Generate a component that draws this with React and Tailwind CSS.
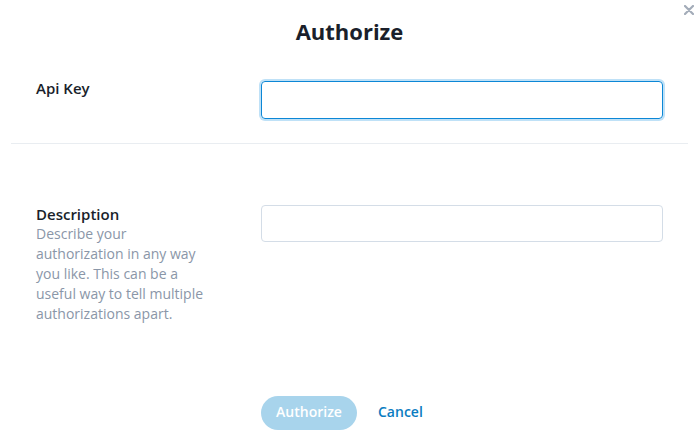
import React from "react";

export default function App() {
  return (
    <div
      className="relative w-[699px] h-[440px] bg-white overflow-hidden"
      style={{ fontFamily: "'Open Sans', Lato, sans-serif" }}
    >
      <button className="absolute right-[3px] top-[3px] w-[14px] h-[14px] flex items-center justify-center text-[#a3acb9]">
        <svg width="10" height="10" viewBox="0 0 10 10">
          <path d="M1 1L9 9M9 1L1 9" stroke="currentColor" strokeWidth="2.2" strokeLinecap="round" />
        </svg>
      </button>
      <h1 className="pt-[16px] text-center text-[22px] leading-[30px] font-bold text-[#1a1f2b]">
        Authorize
      </h1>
      <div className="flex px-[36px] pt-[35px] pb-[24px]">
        <div className="w-[226px] -mt-[3px] text-[15px] leading-[20px] font-semibold text-[#1a1f2b]">Api Key</div>
        <div className="flex-1">
          <div className="h-[38px] w-[402px] rounded-[4px] border-[1.5px] border-[#0c87d6] shadow-[0_0_0_2px_#bfe1f7]" />
        </div>
      </div>
      <div className="mx-[11px] h-px bg-[#e9edf1]" />
      <div className="flex px-[36px] pt-[60px]">
        <div className="w-[226px]">
          <div className="text-[15px] leading-[20px] font-semibold text-[#1a1f2b]">Description</div>
          <div className="w-[200px] text-[14px] leading-[20px] text-[#8a96a8]">
            Describe your
            <br />
            authorization in any way
            <br />
            you like. This can be a
            <br />
            useful way to tell multiple
            <br />
            authorizations apart.
          </div>
        </div>
        <div className="flex-1 pt-[1px]">
          <div className="h-[37px] w-[402px] rounded-[4px] border border-[#d4dde7]" />
        </div>
      </div>
      <div className="flex items-center pl-[261px] pt-[72px] gap-[21px]">
        <button className="h-[34px] w-[96px] pb-[4px] rounded-full bg-[#a8d4ec] text-white text-[14px] font-semibold">
          Authorize
        </button>
        <button className="-mt-[4px] text-[#0a7cc1] text-[14px] font-semibold">Cancel</button>
      </div>
    </div>
  );
}
